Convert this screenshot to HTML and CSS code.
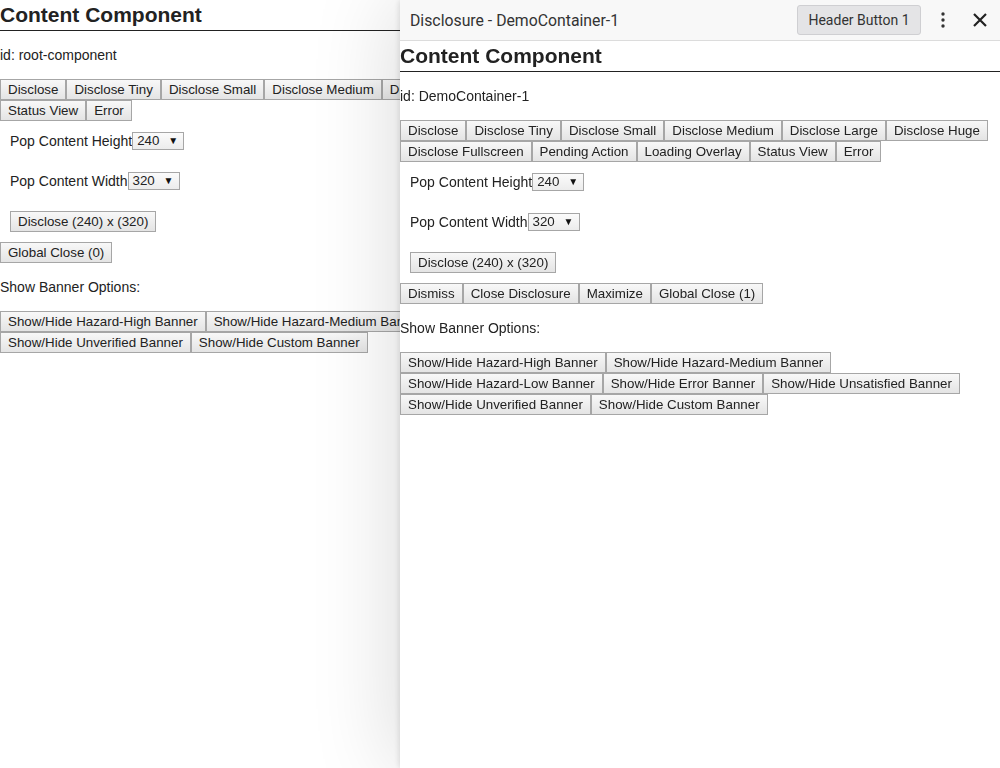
FILE: index.html
```html
<!DOCTYPE html>
<html>
<head>
<meta charset="utf-8">
<link rel="stylesheet" href="styles.css">
</head>
<body>
<div class="content">
  <h3 class="heading">Content Component</h3>
  <p class="para">id: root-component</p>
  <div class="btns"><button>Disclose</button><button>Disclose Tiny</button><button>Disclose Small</button><button>Disclose Medium</button><button>Disclose Large</button><button>Disclose Huge</button><button>Disclose Fullscreen</button><button>Pending Action</button><button>Loading Overlay</button><button>Status View</button><button>Error</button></div>
  <div class="row"><span class="lbl">Pop Content Height</span><span class="sel">240</span></div>
  <div class="row"><span class="lbl">Pop Content Width</span><span class="sel">320</span></div>
  <div class="row row-btn"><button>Disclose (240) x (320)</button></div>
  <div class="btns"><button>Global Close (0)</button></div>
  <p class="para">Show Banner Options:</p>
  <div class="btns"><button>Show/Hide Hazard-High Banner</button><button>Show/Hide Hazard-Medium Banner</button><button>Show/Hide Hazard-Low Banner</button><button>Show/Hide Error Banner</button><button>Show/Hide Unsatisfied Banner</button><button>Show/Hide Unverified Banner</button><button>Show/Hide Custom Banner</button></div>
</div>

<div class="drawer">
  <div class="dhead">
    <span class="dtitle">Disclosure - DemoContainer-1</span>
    <span class="hbtn">Header Button 1</span>
    <span class="icon kebab"><svg width="24" height="24" viewBox="0 0 24 24"><circle cx="12" cy="6" r="1.7" fill="#333"/><circle cx="12" cy="12" r="1.7" fill="#333"/><circle cx="12" cy="18" r="1.7" fill="#333"/></svg></span>
    <span class="icon close"><svg width="24" height="24" viewBox="0 0 24 24"><path d="M6 6L18 18M18 6L6 18" stroke="#222" stroke-width="2.2" fill="none"/></svg></span>
  </div>
  <div class="content">
    <h3 class="heading">Content Component</h3>
    <p class="para">id: DemoContainer-1</p>
    <div class="btns"><button>Disclose</button><button>Disclose Tiny</button><button>Disclose Small</button><button>Disclose Medium</button><button>Disclose Large</button><button>Disclose Huge</button><button>Disclose Fullscreen</button><button>Pending Action</button><button>Loading Overlay</button><button>Status View</button><button>Error</button></div>
    <div class="row"><span class="lbl">Pop Content Height</span><span class="sel">240</span></div>
    <div class="row"><span class="lbl">Pop Content Width</span><span class="sel">320</span></div>
    <div class="row row-btn"><button>Disclose (240) x (320)</button></div>
    <div class="btns"><button>Dismiss</button><button>Close Disclosure</button><button>Maximize</button><button>Global Close (1)</button></div>
    <p class="para">Show Banner Options:</p>
    <div class="btns"><button>Show/Hide Hazard-High Banner</button><button>Show/Hide Hazard-Medium Banner</button><button>Show/Hide Hazard-Low Banner</button><button>Show/Hide Error Banner</button><button>Show/Hide Unsatisfied Banner</button><button>Show/Hide Unverified Banner</button><button>Show/Hide Custom Banner</button></div>
  </div>
</div>
</body>
</html>
```

FILE: styles.css
```css
html, body {
  margin: 0;
  padding: 0;
  background: #fff;
}
body {
  font-family: "Liberation Sans", Arial, sans-serif;
  color: #222;
  font-size: 14px;
}
.content {
  width: 100%;
}
.heading {
  margin: 0;
  font-size: 21px;
  font-weight: bold;
  line-height: 30px;
  height: 30px;
  border-bottom: 1px solid #222;
}
.para {
  margin: 16px 0;
  line-height: 16px;
  font-size: 14px;
}
.btns {
  display: flex;
  flex-wrap: wrap;
}
button {
  font-family: "Liberation Sans", Arial, sans-serif;
  font-size: 13.33px;
  color: #222;
  height: 21px;
  padding: 0 7px;
  margin: 0;
  border: 1px solid #a6a6a6;
  border-radius: 0;
  background: linear-gradient(#f8f8f8, #e4e4e4);
  line-height: 19px;
}
.row {
  padding: 10px;
  height: 20px;
  display: flex;
  align-items: center;
}
.row-btn {
  height: 21px;
}
.lbl {
  font-size: 14px;
}
.sel {
  position: relative;
  box-sizing: border-box;
  width: 52px;
  height: 18px;
  border: 1px solid #a6a6a6;
  background: linear-gradient(#fbfbfb, #ececec);
  font-size: 13.33px;
  line-height: 16px;
  padding-left: 4px;
}
.sel::after {
  content: "\25BC";
  position: absolute;
  right: 5px;
  top: 0;
  font-size: 10px;
  line-height: 15px;
  color: #111;
}
.drawer {
  position: fixed;
  top: 0;
  right: 0;
  width: 600px;
  height: 100%;
  background: #fff;
  box-shadow: -6px 0 80px rgba(0, 0, 0, 0.14), -1px 0 6px rgba(0,0,0,0.12);
}
.dhead {
  height: 41px;
  box-sizing: border-box;
  border-bottom: 1px solid #dcdcdc;
  background: #f8f8f8;
  display: flex;
  align-items: center;
  padding-left: 10px;
  font-family: Roboto, "Liberation Sans", sans-serif;
}
.dtitle {
  font-size: 15.8px;
  color: #333;
  flex: 1;
}
.hbtn {
  box-sizing: border-box;
  height: 30px;
  width: 124px;
  display: flex;
  align-items: center;
  justify-content: center;
  background: #e4e4e6;
  border: 1px solid #cfcfd2;
  border-radius: 3px;
  font-size: 14px;
  color: #333;
}
.icon {
  display: flex;
  align-items: center;
  justify-content: center;
}
.kebab {
  width: 24px;
  margin-left: 10px;
}
.close {
  width: 24px;
  margin-left: 13px;
  margin-right: 8px;
}
```
